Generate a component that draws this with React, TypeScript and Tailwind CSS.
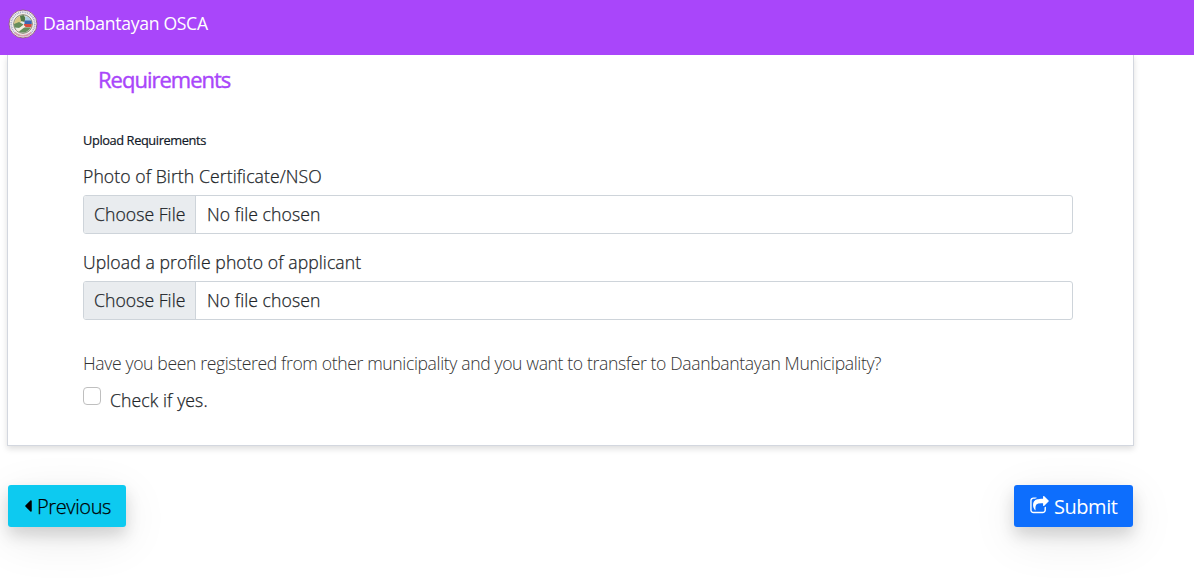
import { FaCaretLeft } from "react-icons/fa";

function Seal() {
  return (
    <svg className="size-[30px] shrink-0" viewBox="0 0 30 30">
      <circle cx="15" cy="15" r="14" fill="#f6f1ee" stroke="#8c5f78" strokeWidth=".9" />
      <circle cx="15" cy="15" r="11.8" fill="none" stroke="#a3a8cb" strokeWidth="1.8" strokeDasharray="1 .8" />
      <path d="M7 23.600a11.8 11.8 0 0 0 16 0" fill="none" stroke="#e0929c" strokeWidth="1.800" strokeDasharray="1.2 .6" />
      <circle cx="15" cy="15" r="9.300" fill="#e3ebe6" stroke="#75705c" strokeWidth=".9" />
      <path d="M6.200 15c0-4 3-7.500 7-8.300l1 5-3 3z" fill="#d8c886" />
      <path d="M12 7l3.500-1 2 3-1 4-3.500-1z" fill="#527a48" />
      <path d="M17.500 7l4 2 1.500 3h-6z" fill="#a9cfe3" />
      <path d="M16.500 11.500h7l.3 3.500h-7.300z" fill="#3b68b0" />
      <path d="M16 15h7.800l-.8 3.300h-7z" fill="#d84c40" />
      <path d="M6 15l5-2 4.500 2.500-3.500 3.500-5.500-.5z" fill="#668d5b" />
      <path d="M13 18.500h9.500c-1.500 4-7 6.500-12 4z" fill="#66905e" />
      <path d="M8 21l7.500-5 2 1.500-6.500 5z" fill="#f3eedc" />
    </svg>
  );
}

function ShareIcon() {
  return (
    <svg className="h-5 w-[19px] shrink-0" viewBox="0 0 1664 1792" fill="currentColor">
      <path d="M1408 989v259q0 119-84.500 203.500t-203.500 84.500h-832q-119 0-203.500-84.500t-84.500-203.500v-832q0-119 84.500-203.500t203.500-84.500h255q13 0 22.500 9.500t9.500 22.500q0 27-26 32-77 26-133 60-10 4-16 4h-112q-66 0-113 47t-47 113v832q0 66 47 113t113 47h832q66 0 113-47t47-113v-214q0-19 18-29 28-13 54-37 16-16 35-8 21 9 21 29zm237-496l-384 384q-18 19-45 19-12 0-25-5-39-17-39-59v-192h-160q-323 0-438 131-119 137-74 473 3 23-20 34-8 2-12 2-16 0-26-13-10-14-21-31t-39.500-68.500-49.500-99.500-38.500-114-17.500-122q0-49 3.500-91t14-90 28-88 47-81.500 68.500-74 94.500-61.500 124.500-48.500 159.500-30.500 196.500-11h160v-192q0-42 39-59 13-5 25-5 26 0 45 19l384 384q19 19 19 45t-19 45z" />
    </svg>
  );
}

function FileField({ label }: { label: string }) {
  return (
    <label className="block text-[17.6px] [-webkit-text-stroke:0.25px]">
      <span className="mb-[5px] block leading-[27px] tracking-[0.09px]">{label}</span>
      <span className="flex h-[39px] overflow-hidden rounded-[3px] border border-[#ced4da]">
        <span className="flex w-[112px] items-center border-r border-[#ced4da] bg-[#e9ecef] pl-[10px] tracking-[0.05px]">Choose File</span>
        <span className="flex items-center pl-[11px] tracking-[0.07px]">No file chosen</span>
        <input type="file" className="sr-only" />
      </span>
    </label>
  );
}

export default function App() {
  return (
    <div className="h-[581px] overflow-hidden bg-white font-['Open_Sans','Noto_Sans',sans-serif] font-light text-[#212529]">
      <header className="relative flex h-[55px] items-start bg-[#a946fa] pt-[9px] pl-2 text-white">
        <Seal />
        <span className="ml-[5px] text-[17.6px] leading-[29px] font-normal tracking-[-0.31px] whitespace-nowrap">Daanbantayan OSCA</span>
      </header>
      <main className="pr-[60px] pl-[7px]">
        <section className="h-[391px] border-x border-b border-[#d3d7df] px-[75px] shadow-[0_3px_6px_rgba(0,0,0,0.13)]">
          <h2 className="pt-[9px] pl-[15px] text-[22px] leading-[30px] font-medium tracking-[-1px] whitespace-nowrap text-[#a946fa] [-webkit-text-stroke:0.4px]">Requirements</h2>
          <h3 className="mt-[36px] text-[12.8px] leading-5 font-medium tracking-[-0.39px] text-[#111827] [-webkit-text-stroke:0.2px]">Upload Requirements</h3>
          <div className="mt-[13px] mr-[-15px] space-y-[15px]">
            <FileField label="Photo of Birth Certificate/NSO" />
            <FileField label="Upload a profile photo of applicant" />
          </div>
          <p className="mt-[30px] text-[17.6px] leading-[27px] tracking-[-0.373px] whitespace-nowrap text-[#333]">Have you been registered from other municipality and you want to transfer to Daanbantayan Municipality?</p>
          <label className="mt-[10px] flex items-start">
            <input type="checkbox" className="size-[18px] appearance-none rounded-[4px] border border-[#bfbfbf] bg-white checked:bg-[#0d6efd]" />
            <span className="ml-[9px] text-[17.6px] leading-[27px] tracking-[0.1px] [-webkit-text-stroke:0.25px]">Check if yes.</span>
          </label>
        </section>
        <div className="mt-[39px] flex justify-between pl-px">
          <button className="flex h-[42px] w-[118px] items-center rounded-[3px] bg-[#0dcaf0] pl-4 text-[20px] text-black shadow-[0_8px_16px_rgba(0,0,0,0.15),0_12px_48px_rgba(0,0,0,0.09)]">
            <FaCaretLeft className="h-5 w-[8px]" viewBox="0 0 192 512" />
            <span className="mt-[2px] ml-[5px] tracking-[-0.37px] [-webkit-text-stroke:0.25px]">Previous</span>
          </button>
          <button className="mr-px flex h-[42px] w-[119px] items-center rounded-[3px] bg-[#0d6efd] pl-4 text-[20px] font-normal text-white shadow-[0_8px_16px_rgba(0,0,0,0.15),0_12px_48px_rgba(0,0,0,0.09)]">
            <ShareIcon />
            <span className="mt-[2px] ml-[5px] tracking-[-0.45px]">Submit</span>
          </button>
        </div>
      </main>
    </div>
  );
}
